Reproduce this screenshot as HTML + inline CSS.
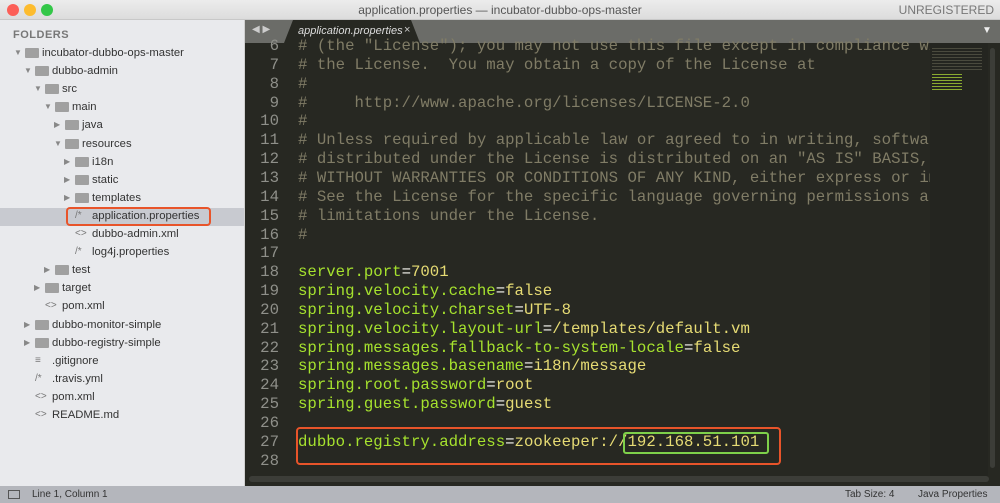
<!DOCTYPE html>
<html><head><meta charset="utf-8"><style>
*{margin:0;padding:0;box-sizing:border-box}
body{width:1000px;height:503px;overflow:hidden;background:#272822;font-family:"Liberation Sans",sans-serif;position:relative}
.title{position:absolute;left:0;top:0;width:1000px;height:20px;background:linear-gradient(#ececec,#dcdcdc);border-bottom:1px solid #c8c8c8;font-size:12px;color:#555;text-align:center;line-height:20px}
.dot{position:absolute;top:4px;width:12px;height:12px;border-radius:50%}
.unreg{position:absolute;right:6px;top:0;color:#777;font-size:12px}
.side{position:absolute;left:0;top:20px;width:245px;height:466px;background:#e9eaed;border-right:1px solid #d0d0d0}
.side .h{position:absolute;left:13px;top:9px;font-size:11px;font-weight:bold;color:#777;letter-spacing:.5px}
.it{position:absolute;height:18px;font-size:11.3px;color:#333;line-height:18px;white-space:nowrap}
.tri{position:absolute;color:#888;font-size:8px}
.fold{position:absolute;top:4px;width:14px;height:10px;background:#a0a0a0;border-radius:1px}
.fic{position:absolute;color:#777;font-size:10px}
.tabbar{position:absolute;left:245px;top:20px;width:755px;height:23px;background:#6b6c68}
.tab{position:absolute;left:284px;top:20px;width:136px;height:23px;background:#272822;clip-path:polygon(9px 0,127px 0,136px 23px,0 23px)}
.code{position:absolute;left:245px;top:37px;width:685px;height:448px;font-family:"Liberation Mono",monospace;font-size:15.7px;overflow:hidden}
.ln{position:absolute;width:34px;text-align:right;color:#8f908a}
.tx{position:absolute;left:53px;white-space:pre;color:#807c66}
.k{color:#a6e22e}.e{color:#f8f8f2}.v{color:#e6db74}
.status{position:absolute;left:0;top:486px;width:1000px;height:17px;background:#b4b6bc;font-size:10px;color:#333;line-height:17px}
</style></head><body>
<div class="title">application.properties — incubator-dubbo-ops-master<span class="unreg">UNREGISTERED</span></div>
<div class="dot" style="left:7px;background:#fc5f57"></div>
<div class="dot" style="left:24px;background:#fdbc2e"></div>
<div class="dot" style="left:41px;background:#33c748"></div>
<div class="side">
<div class="h">FOLDERS</div>
<div style="position:absolute;left:0;top:188px;width:244px;height:18px;background:#c8cad0"></div>
<div style="position:absolute;left:66px;top:187px;width:145px;height:19px;border:2px solid #e8542a;border-radius:4px"></div>
</div>
<div id="tree"></div>
<div class="tabbar"></div>
<div style="position:absolute;left:252px;top:24px;color:#ccc;font-size:10px">◀ ▶</div>
<div class="tab"></div>
<div style="position:absolute;left:298px;top:25px;color:#ddd;font-size:11px;font-style:italic">application.properties</div>
<div style="position:absolute;left:404px;top:24px;color:#ccc;font-size:11px">×</div>
<div style="position:absolute;left:982px;top:25px;color:#eee;font-size:10px">▼</div>
<div class="code" id="code"></div>
<div style="position:absolute;left:930px;top:43px;width:58px;height:435px;background:#242520"></div>
<div style="position:absolute;left:932px;top:48px;width:50px;height:22px;background:repeating-linear-gradient(#5a5a4a 0 1px,transparent 1px 3px);opacity:.7"></div>
<div style="position:absolute;left:932px;top:74px;width:30px;height:16px;background:repeating-linear-gradient(#8aaa30 0 1px,transparent 1px 3px)"></div>
<div style="position:absolute;left:990px;top:48px;width:5px;height:420px;background:#3c3d38;border-radius:3px"></div>
<div style="position:absolute;left:249px;top:476px;width:740px;height:6px;background:#3c3d38;border-radius:3px"></div>
<div style="position:absolute;left:296px;top:427px;width:485px;height:38px;border:2px solid #e8542a;border-radius:4px"></div>
<div style="position:absolute;left:623px;top:432px;width:146px;height:22px;border:2px solid #7ed04a;border-radius:3px"></div>
<div class="status"><span style="position:absolute;left:32px">Line 1, Column 1</span><span style="position:absolute;left:845px">Tab Size: 4</span><span style="position:absolute;left:918px">Java Properties</span></div>
<div style="position:absolute;left:8px;top:490px;width:12px;height:9px;border:1px solid #555"></div>
<script>
var t=[[0,1,"incubator-dubbo-ops-master",'d'],[1,1,"dubbo-admin",'d'],[2,1,"src",'d'],[3,1,"main",'d'],[4,0,"java",'c'],[4,1,"resources",'d'],[5,0,"i18n",'c'],[5,0,"static",'c'],[5,0,"templates",'c'],[5,2,"application.properties",'/*'],[5,2,"dubbo-admin.xml",'&lt;&gt;'],[5,2,"log4j.properties",'/*'],[3,0,"test",'c'],[2,0,"target",'c'],[2,2,"pom.xml",'&lt;&gt;'],[1,0,"dubbo-monitor-simple",'c'],[1,0,"dubbo-registry-simple",'c'],[1,2,".gitignore",'≡'],[1,2,".travis.yml",'/*'],[1,2,"pom.xml",'&lt;&gt;'],[1,2,"README.md",'&lt;&gt;']];
var h='';t.forEach(function(r,i){var y=44+i*18.1,x=14+r[0]*10;h+='<div class="it" style="left:0;top:'+y+'px;width:240px">';
if(r[1]!=2)h+='<span class="tri" style="left:'+x+'px">'+(r[1]==1?'▼':'▶')+'</span><span class="fold" style="left:'+(x+11)+'px"></span>';
else h+='<span class="fic" style="left:'+(x+11)+'px">'+r[3]+'</span>';
h+='<span style="position:absolute;left:'+(x+28)+'px">'+r[2]+'</span></div>';});
document.getElementById('tree').innerHTML=h;
var L=[[6,'# (the "License"); you may not use this file except in compliance with'],[7,'# the License.  You may obtain a copy of the License at'],[8,'#'],[9,'#     http://www.apache.org/licenses/LICENSE-2.0'],[10,'#'],[11,'# Unless required by applicable law or agreed to in writing, software'],[12,'# distributed under the License is distributed on an "AS IS" BASIS,'],[13,'# WITHOUT WARRANTIES OR CONDITIONS OF ANY KIND, either express or implied.'],[14,'# See the License for the specific language governing permissions and'],[15,'# limitations under the License.'],[16,'#'],[17,''],[18,'server.port=7001'],[19,'spring.velocity.cache=false'],[20,'spring.velocity.charset=UTF-8'],[21,'spring.velocity.layout-url=/templates/default.vm'],[22,'spring.messages.fallback-to-system-locale=false'],[23,'spring.messages.basename=i18n/message'],[24,'spring.root.password=root'],[25,'spring.guest.password=guest'],[26,''],[27,'dubbo.registry.address=zookeeper://192.168.51.101'],[28,'']];
var c='';L.forEach(function(r,i){var y=i*18.85;var s=r[1];
if(s&&s[0]!='#'){var p=s.indexOf('=');s='<span class="k">'+s.slice(0,p)+'</span><span class="e">=</span><span class="v">'+s.slice(p+1)+'</span>';}
c+='<div class="ln" style="left:0;top:'+y+'px">'+r[0]+'</div><div class="tx" style="top:'+y+'px">'+s+'</div>';});
document.getElementById('code').innerHTML=c;
</script>
</body></html>
